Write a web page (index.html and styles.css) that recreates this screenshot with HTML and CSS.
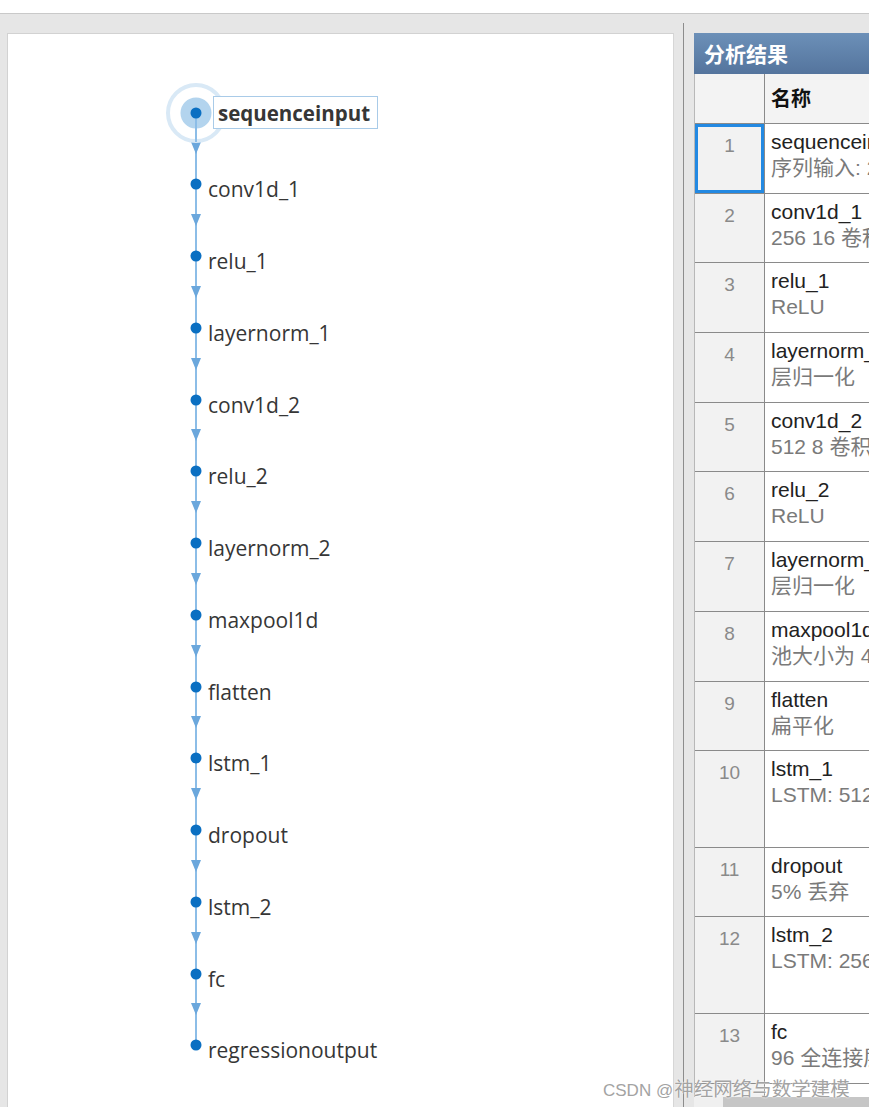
FILE: index.html
```html
<!DOCTYPE html>
<html lang="zh">
<head>
<meta charset="utf-8">
<title>分析结果</title>
<link rel="stylesheet" href="styles.css">
</head>
<body>
<div class="topbar"></div>
<div class="main">
  <div class="canvas-panel">
    <svg class="graph" width="665" height="1073" viewBox="8 34 665 1073" xmlns="http://www.w3.org/2000/svg">
      <line x1="196" y1="113" x2="196" y2="1045" stroke="#8cbde7" stroke-width="2"/>
      <g fill="#6ba7dc">
        <polygon points="191,142 201,142 196,154"/>
        <polygon points="191,214 201,214 196,226"/>
        <polygon points="191,286 201,286 196,298"/>
        <polygon points="191,358 201,358 196,370"/>
        <polygon points="191,429 201,429 196,441"/>
        <polygon points="191,501 201,501 196,513"/>
        <polygon points="191,573 201,573 196,585"/>
        <polygon points="191,645 201,645 196,657"/>
        <polygon points="191,716 201,716 196,728"/>
        <polygon points="191,788 201,788 196,800"/>
        <polygon points="191,860 201,860 196,872"/>
        <polygon points="191,932 201,932 196,944"/>
        <polygon points="191,1003 201,1003 196,1015"/>
      </g>
      <circle cx="196" cy="113" r="28" fill="none" stroke="#d9e9f6" stroke-width="4"/>
      <circle cx="196" cy="113" r="15.5" fill="#b3d4ee"/>
      <line x1="196" y1="113" x2="196" y2="142" stroke="#8cbde7" stroke-width="2"/>
      <g fill="#0a6fc2">
        <circle cx="196" cy="113" r="5.5"/>
        <circle cx="196" cy="184" r="5.5"/>
        <circle cx="196" cy="256" r="5.5"/>
        <circle cx="196" cy="328" r="5.5"/>
        <circle cx="196" cy="400" r="5.5"/>
        <circle cx="196" cy="471" r="5.5"/>
        <circle cx="196" cy="543" r="5.5"/>
        <circle cx="196" cy="615" r="5.5"/>
        <circle cx="196" cy="687" r="5.5"/>
        <circle cx="196" cy="758" r="5.5"/>
        <circle cx="196" cy="830" r="5.5"/>
        <circle cx="196" cy="902" r="5.5"/>
        <circle cx="196" cy="974" r="5.5"/>
        <circle cx="196" cy="1045" r="5.5"/>
      </g>
      <rect x="213.5" y="96.5" width="164" height="32" fill="#fff" stroke="#a9cbe8"/>
      <text class="node-label node-label-sel" x="218" y="121">sequenceinput</text>
      <text class="node-label" x="208" y="197">conv1d_1</text>
      <text class="node-label" x="208" y="269">relu_1</text>
      <text class="node-label" x="208" y="341">layernorm_1</text>
      <text class="node-label" x="208" y="413">conv1d_2</text>
      <text class="node-label" x="208" y="484">relu_2</text>
      <text class="node-label" x="208" y="556">layernorm_2</text>
      <text class="node-label" x="208" y="628">maxpool1d</text>
      <text class="node-label" x="208" y="700">flatten</text>
      <text class="node-label" x="208" y="771">lstm_1</text>
      <text class="node-label" x="208" y="843">dropout</text>
      <text class="node-label" x="208" y="915">lstm_2</text>
      <text class="node-label" x="208" y="987">fc</text>
      <text class="node-label" x="208" y="1058">regressionoutput</text>
    </svg>
  </div>
  <div class="splitter"></div>
  <div class="results">
    <div class="results-title">分析结果</div>
    <div class="table">
      <div class="row head"><div class="idx"></div><div class="name">名称</div></div>
      <div class="row"><div class="idx selected">1</div><div class="name"><div class="n">sequenceinput</div><div class="d">序列输入: 24 维</div></div></div>
      <div class="row"><div class="idx">2</div><div class="name"><div class="n">conv1d_1</div><div class="d">256 16 卷积: 步幅 1，填充 'causal'</div></div></div>
      <div class="row"><div class="idx">3</div><div class="name"><div class="n">relu_1</div><div class="d">ReLU</div></div></div>
      <div class="row"><div class="idx">4</div><div class="name"><div class="n">layernorm_1</div><div class="d">层归一化</div></div></div>
      <div class="row"><div class="idx">5</div><div class="name"><div class="n">conv1d_2</div><div class="d">512 8 卷积: 步幅 1，填充 'causal'</div></div></div>
      <div class="row"><div class="idx">6</div><div class="name"><div class="n">relu_2</div><div class="d">ReLU</div></div></div>
      <div class="row"><div class="idx">7</div><div class="name"><div class="n">layernorm_2</div><div class="d">层归一化</div></div></div>
      <div class="row"><div class="idx">8</div><div class="name"><div class="n">maxpool1d</div><div class="d">池大小为 4 的一维最大池化</div></div></div>
      <div class="row"><div class="idx">9</div><div class="name"><div class="n">flatten</div><div class="d">扁平化</div></div></div>
      <div class="row tall"><div class="idx">10</div><div class="name"><div class="n">lstm_1</div><div class="d">LSTM: 512 个隐含单元</div></div></div>
      <div class="row"><div class="idx">11</div><div class="name"><div class="n">dropout</div><div class="d">5% 丢弃</div></div></div>
      <div class="row tall"><div class="idx">12</div><div class="name"><div class="n">lstm_2</div><div class="d">LSTM: 256 个隐含单元</div></div></div>
      <div class="row"><div class="idx">13</div><div class="name"><div class="n">fc</div><div class="d">96 全连接层</div></div></div>
      <div class="row last"><div class="idx"></div><div class="name"></div></div>
    </div>
    <div class="hscroll"><span class="hs-arrow"></span><div class="hs-thumb"></div></div>
  </div>
</div>
<div class="watermark"><span class="wm-latin">CSDN @</span><span class="wm-cjk">神经网络与数学建模</span></div>
</body>
</html>
```

FILE: styles.css
```css
html, body {
  margin: 0;
  padding: 0;
}
body {
  width: 869px;
  height: 1107px;
  overflow: hidden;
  background: #e6e6e6;
  position: relative;
  font-family: "Liberation Sans", "Noto Sans CJK SC", sans-serif;
}
.topbar {
  height: 13px;
  background: #ffffff;
  border-bottom: 1px solid #c9c9c9;
}
.main {
  display: flex;
  height: 1093px;
}
.canvas-panel {
  box-sizing: border-box;
  margin-left: 7px;
  margin-top: 19px;
  width: 667px;
  height: 1074px;
  background: #ffffff;
  border-top: 1px solid #d2d2d2;
  border-left: 1px solid #d2d2d2;
  border-right: 1px solid #d6d6d6;
  overflow: hidden;
}
.graph {
  display: block;
}
.node-label {
  font-family: "Open Sans", "Noto Sans", sans-serif;
  font-size: 21px;
  fill: #363636;
}
.node-label-sel {
  font-weight: 700;
  font-size: 20.5px;
}
.splitter {
  box-sizing: border-box;
  width: 20px;
  margin-top: 9px;
  padding-left: 9px;
}
.splitter::before {
  content: "";
  display: block;
  width: 1px;
  height: 100%;
  background: #8c8c8c;
}
.results {
  position: relative;
  margin-top: 19px;
  width: 175px;
  height: 1074px;
  overflow: hidden;
  background: #ffffff;
}
.results-title {
  height: 41px;
  line-height: 40px;
  padding-left: 10px;
  color: #ffffff;
  font-family: "Noto Sans CJK SC", sans-serif;
  font-weight: 700;
  font-size: 21px;
  background: linear-gradient(#6c90b8, #54749d);
  white-space: nowrap;
}
.table {
  width: 400px;
  border-left: 1px solid #b8b8b8;
  box-sizing: border-box;
}
.row {
  display: flex;
  box-sizing: border-box;
  height: 69.7px;
  border-bottom: 1px solid #8a8a8a;
}
.row.tall {
  height: 96.5px;
}
.row.last {
  height: 40px;
  border-bottom: none;
}
.row.head {
  height: 50px;
  background: #f3f3f3;
}
.idx {
  box-sizing: border-box;
  width: 70px;
  flex: none;
  border-right: 1px solid #8a8a8a;
  background: #f2f2f2;
  text-align: center;
  color: #8a8a8a;
  font-size: 19px;
  line-height: 26px;
  padding-top: 9px;
}
.idx.selected {
  box-shadow: inset 0 0 0 3px #2389e2;
}
.row.head .idx {
  background: #f3f3f3;
}
.name {
  flex: 1;
  padding: 5px 0 0 6px;
  white-space: nowrap;
  font-size: 21px;
  line-height: 26px;
  color: #222222;
}
.row.head .name {
  padding-top: 11px;
  font-family: "Noto Sans CJK SC", sans-serif;
  font-weight: 700;
  font-size: 20px;
  color: #111111;
}
.d {
  color: #7a7a7a;
}
.hscroll {
  position: absolute;
  left: 0;
  right: 0;
  bottom: 0;
  height: 10px;
  display: flex;
  background: #f0f0f0;
}
.hs-arrow {
  width: 29px;
}
.hs-thumb {
  flex: 1;
  background: #c6c6c6;
}
.watermark {
  position: absolute;
  left: 603px;
  top: 1073px;
  white-space: nowrap;
  color: #a3a3a3;
  text-shadow: 0 0 2px #ffffff, 0 0 1px #ffffff;
}
.wm-latin {
  font-family: "Liberation Sans", sans-serif;
  font-size: 17px;
}
.wm-cjk {
  font-family: "Noto Sans CJK SC", sans-serif;
  font-size: 19.5px;
  margin-left: 1px;
}
```
